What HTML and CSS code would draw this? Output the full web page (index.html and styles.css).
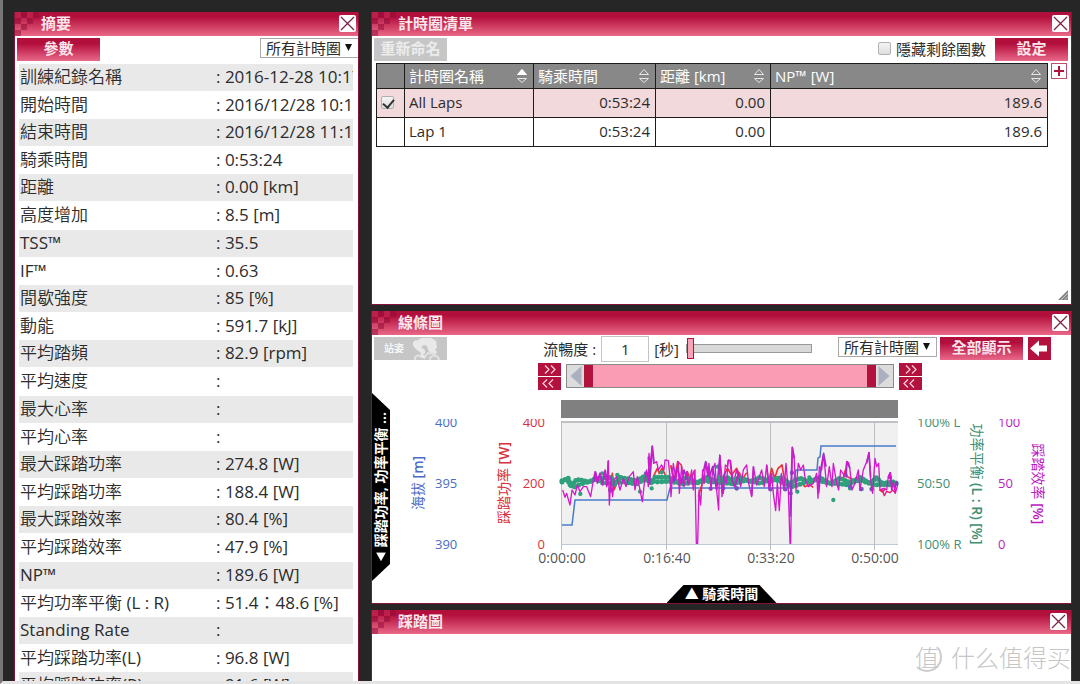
FILE: index.html
```html
<!DOCTYPE html>
<html lang="zh-Hant">
<head>
<meta charset="utf-8">
<title>訓練紀錄</title>
<link rel="stylesheet" href="styles.css">
</head>
<body>
<svg class="defs" aria-hidden="true">
  <symbol id="checker" viewBox="0 0 24 24">
    <path fill="#8e0c38" fill-opacity=".5" d="M6 0h6v6H6zM18 0h6v6h-6zM0 6h6v6H0zM12 6h6v6h-6zM6 12h6v6H6zM0 18h6v6H0z"/>
    <path fill="#ef7f9b" fill-opacity=".15" d="M0 0h6v6H0zM12 0h6v6h-6zM6 6h6v6H6zM0 12h6v6H0z"/>
  </symbol>
  <symbol id="cross" viewBox="0 0 17 17">
    <path stroke="#7c2444" stroke-width="1.3" d="M2 2l13 13M15 2L2 15"/>
  </symbol>
  <symbol id="sort" viewBox="0 0 12 16">
    <path fill="none" stroke="#e6e6e6" d="M1.5 6.5L6 1.5l4.500 5zM1.500 10.500L6 14.500l4.500-4z"/>
  </symbol>
  <symbol id="forward" viewBox="0 0 23 12">
    <path fill="none" stroke="#ffd3de" stroke-width="1.200" d="M7 2l4 4-4 4M13 2l4 4-4 4"/>
  </symbol>
  <symbol id="backward" viewBox="0 0 23 12">
    <path fill="none" stroke="#ffd3de" stroke-width="1.200" d="M9 2L5 6l4 4M15 2l-4 4 4 4"/>
  </symbol>
</svg>
<div class="app">
  <main class="desk">
    <section class="panel summary">
      <header class="panel-head">
        <svg class="checker"><use href="#checker"/></svg>
        <h2>摘要</h2>
        <button class="close" aria-label="關閉"><svg><use href="#cross"/></svg></button>
      </header>
      <div class="toolbar">
        <button class="action wide">參數</button>
        <span class="picker push"><select aria-label="計時圈"><option>所有計時圈</option></select></span>
      </div>
      <table class="facts">
        <tr><th>訓練紀錄名稱</th><td>: 2016-12-28 10:17:07</td></tr>
        <tr><th>開始時間</th><td>: 2016/12/28 10:17:07</td></tr>
        <tr><th>結束時間</th><td>: 2016/12/28 11:10:31</td></tr>
        <tr><th>騎乘時間</th><td>: 0:53:24</td></tr>
        <tr><th>距離</th><td>: 0.00 [km]</td></tr>
        <tr><th>高度增加</th><td>: 8.5 [m]</td></tr>
        <tr><th>TSS™</th><td>: 35.5</td></tr>
        <tr><th>IF™</th><td>: 0.63</td></tr>
        <tr><th>間歇強度</th><td>: 85 [%]</td></tr>
        <tr><th>動能</th><td>: 591.7 [kJ]</td></tr>
        <tr><th>平均踏頻</th><td>: 82.9 [rpm]</td></tr>
        <tr><th>平均速度</th><td>:</td></tr>
        <tr><th>最大心率</th><td>:</td></tr>
        <tr><th>平均心率</th><td>:</td></tr>
        <tr><th>最大踩踏功率</th><td>: 274.8 [W]</td></tr>
        <tr><th>平均踩踏功率</th><td>: 188.4 [W]</td></tr>
        <tr><th>最大踩踏效率</th><td>: 80.4 [%]</td></tr>
        <tr><th>平均踩踏效率</th><td>: 47.9 [%]</td></tr>
        <tr><th>NP™</th><td>: 189.6 [W]</td></tr>
        <tr><th>平均功率平衡 (L : R)</th><td>: 51.4：48.6 [%]</td></tr>
        <tr><th>Standing Rate</th><td>:</td></tr>
        <tr><th>平均踩踏功率(L)</th><td>: 96.8 [W]</td></tr>
        <tr><th>平均踩踏功率(R)</th><td>: 91.6 [W]</td></tr>
      </table>
    </section>

    <div class="stack">
      <section class="panel laps">
        <header class="panel-head">
          <svg class="checker"><use href="#checker"/></svg>
          <h2>計時圈清單</h2>
          <button class="close" aria-label="關閉"><svg><use href="#cross"/></svg></button>
        </header>
        <div class="toolbar">
          <button class="action off" disabled>重新命名</button>
          <label class="check push"><input type="checkbox">隱藏剩餘圈數</label>
          <button class="action">設定</button>
        </div>
        <div class="lap-area">
          <table class="lap-table">
            <colgroup><col class="c-check"><col class="c-name"><col class="c-time"><col class="c-dist"><col></colgroup>
            <thead>
              <tr>
                <th></th>
                <th><span class="sorter">計時圈名稱<svg><use href="#sort"/><path fill="#fff" d="M1 7l5-6 5 6z"/></svg></span></th>
                <th><span class="sorter">騎乘時間<svg><use href="#sort"/></svg></span></th>
                <th><span class="sorter">距離 [km]<svg><use href="#sort"/></svg></span></th>
                <th><span class="sorter">NP™ [W]<svg><use href="#sort"/></svg></span></th>
              </tr>
            </thead>
            <tbody>
              <tr class="picked"><td class="tick"><input type="checkbox" checked aria-label="All Laps"></td><td>All Laps</td><td class="num">0:53:24</td><td class="num">0.00</td><td class="num">189.6</td></tr>
              <tr><td></td><td>Lap 1</td><td class="num">0:53:24</td><td class="num">0.00</td><td class="num">189.6</td></tr>
            </tbody>
          </table>
          <button class="add" aria-label="新增欄位"><svg viewBox="0 0 14 14"><path stroke="#b4123e" stroke-width="2" d="M2 7h10M7 2v10"/></svg></button>
        </div>
        <svg class="grip" viewBox="0 0 10 10"><path fill="#858585" d="M10 0v10H0z"/><path stroke="#ccc" d="M3 10l7-7M6.500 10l3.500-3.500"/></svg>
      </section>

      <section class="panel lines">
        <header class="panel-head">
          <svg class="checker"><use href="#checker"/></svg>
          <h2>線條圖</h2>
          <button class="close" aria-label="關閉"><svg><use href="#cross"/></svg></button>
        </header>
        <div class="toolbar">
          <button class="action off rider" disabled>站姿
            <svg viewBox="0 0 28 22"><path fill="#e9e9e9" d="M6 2l4-2h9l5 3 1 6-2 3 2 2-2 3-4-2-3-3-1-4-3-1-3 2 4 3 0 3-2 2 3 1-1 3-5-2 1-4-4-3-3-3-1-2 4-1zM1 4l3-2 4 2 1 3-4 2-4-2z"/><path fill="none" stroke="#e2e2e2" stroke-width="2" d="M3 22c-1-4 3-6 6-3M18 22c-1-5 8-6 9 0M12 20l4-5 8 1"/></svg>
          </button>
          <div class="smooth push">
            <label for="smooth">流暢度 :</label>
            <input id="smooth" class="number" type="text" value="1">
            <span class="unit">[秒]</span>
            <input class="slider" type="range" min="1" max="60" value="1" aria-label="流暢度">
          </div>
          <span class="picker"><select aria-label="計時圈"><option>所有計時圈</option></select></span>
          <button class="action wide">全部顯示</button>
          <button class="back" aria-label="返回"><svg viewBox="0 0 23 23"><path fill="#fff" d="M2 11.500l9-8v5h8v6h-8v5z"/></svg></button>
        </div>
        <div class="range-row">
          <div class="steps">
            <button aria-label="起點向後"><svg><use href="#forward"/></svg></button>
            <button aria-label="起點向前"><svg><use href="#backward"/></svg></button>
          </div>
          <div class="range">
            <button class="arrow" aria-label="向左"><svg viewBox="0 0 14 20"><path fill="#abb0bf" d="M13 0v20L2 10z"/></svg></button>
            <div class="span"></div>
            <button class="arrow" aria-label="向右"><svg viewBox="0 0 14 20"><path fill="#abb0bf" d="M1 0v20l11-10z"/></svg></button>
          </div>
          <div class="steps">
            <button aria-label="終點向後"><svg><use href="#forward"/></svg></button>
            <button aria-label="終點向前"><svg><use href="#backward"/></svg></button>
          </div>
        </div>
        <div class="chart-row">
          <button class="side-tab"><span><i></i>踩踏功率, 功率平衡 ...</span></button>
          <svg class="chart" viewBox="390 393 681 192" role="img" aria-label="踩踏功率與功率平衡">
            <path fill="#808080" d="M561 400h337v18H561z"/>
            <path fill="#f0f0f0" d="M562 421h336v124H562z"/>
            <path fill="none" stroke="#c0c0c4" stroke-width="2" d="M561 422h337"/>
            <path fill="none" stroke="#c0c8d8" d="M561 544.500h337"/>
            <path fill="none" stroke="#bcbcc2" d="M561.500 421v129M666.500 421v129M770.500 421v129M874.500 421v129"/>
            <path fill="none" stroke="#4a7cc8" stroke-width="1.500" d="M562 525H572L575 500H667L670 488H792L796 470H817L818 458L820 457L821 446H896"/>
            <g fill="none" stroke-linejoin="round" transform="translate(540 390) scale(.3333)">
              <path stroke="#f03038" stroke-width="5" d="M210 300L217 250L222 300L240 255M340 260L352 235L358 250L366 235L376 255M392 225L402 275L413 215L424 225L430 280L442 245L452 270L464 240M475 320L490 270L510 250M545 270L562 235L575 255L590 235L600 260"/>
              <g stroke="#2fa07c" stroke-linecap="round">
                <path stroke-width="15" stroke-dasharray="0 10" d="M66 272L85 265L92 290L110 268L150 276L165 266L215 262L222 285L240 262L290 272L318 256L332 280L345 262L385 262L410 275L440 262L470 280L500 262L530 275L560 262L590 275L600 262"/>
                <path stroke-width="15" stroke-dasharray="0 13" d="M66 276L80 268L98 292L130 280L170 268L190 280L250 276L290 282L310 270L350 276L390 274L430 282L490 272L550 280L600 274"/>
                <path stroke-width="13" d="M121 312h0M187 250h0M232 255h0M210 300h0M300 305h0M335 295h0M365 247h0M533 230h0"/>
              </g>
              <path stroke="#7058c0" stroke-width="13" stroke-linecap="round" d="M214 302h0M318 250h0M512 296h0M549 295h0M590 295h0"/>
              <path stroke="#8a35c8" stroke-width="5" d="M162 275L167 246L172 275L180 250L187 280L196 242L202 285L205 212M325 200L329 280L337 168L342 215M395 230L402 275L412 235L425 280L432 240L445 280M490 245L497 215L508 260L518 230L530 300L540 195"/>
              <path stroke="#d418cc" stroke-width="4" d="M68 300L75 322L80 310L86 332L90 345L96 300L105 315L112 285L120 305L130 290L140 290L152 320L160 270L165 245L172 280L180 250L188 285L195 240L200 290L205 212L208 345L213 260L218 320L222 270L230 260L240 300L250 265L258 290L268 260L280 245L285 300L292 260L300 300L307 335L313 280L320 240L325 290L327 190L331 230L336 170L341 220L350 215L355 240L365 225L372 240L375 210L385 212L390 260L393 320L400 220L408 270L415 215L418 310L425 230L432 290L440 245L447 285L455 240L460 300L465 240L469 460H473L477 300L482 345L488 240L492 280L497 215L503 260L507 220L513 300L518 240L525 220L530 300L536 360L539 195L543 235L550 310L556 225L562 230L566 210L572 212L576 250L580 280L590 240L596 265L600 262"/>
            </g>
            <g fill="none" stroke-linejoin="round" transform="translate(720 390) scale(.3333)">
              <path stroke="#f03038" stroke-width="5" d="M50 270L58 248L66 270L80 248M146 275L155 235L164 265L174 235L186 225L192 260L200 270M228 290L245 280L255 290L268 284L280 292M370 265L376 240L382 260L398 268M480 300L488 306L496 295"/>
              <g stroke="#2fa07c" stroke-linecap="round">
                <path stroke-width="15" stroke-dasharray="0 10" d="M0 262L25 276L60 262L90 275L120 262L150 275L180 262L210 280L240 264L270 276L300 262L330 282L360 264L390 278L420 262L450 280L470 262L485 280L520 276L533 282"/>
                <path stroke-width="15" stroke-dasharray="0 12" d="M0 274L40 282L80 270L120 280L160 266L200 284L220 290L280 268L320 278L380 284L420 270L460 284L500 284L530 286"/>
                <path stroke-width="13" d="M340 330h0M195 295h0M232 305h0M390 295h0M425 297h0M455 296h0M268 262h0M272 272h0"/>
              </g>
              <path stroke="#7058c0" stroke-width="13" stroke-linecap="round" d="M10 295h0M50 295h0M152 298h0M196 298h0M205 285h0M212 310h0M216 248h0M390 290h0M423 297h0M455 298h0M510 262h0"/>
              <path stroke="#8a35c8" stroke-width="5" d="M8 310L14 250M36 270L44 290L55 255M95 318L101 230M140 225L148 300L155 250M210 380L217 172L223 205M296 310L303 235L311 190L318 230M378 262L381 215L390 235M440 220L447 188L452 262M505 262L511 248L516 300M524 300L529 275L533 285"/>
              <path stroke="#d418cc" stroke-width="4" d="M0 200L6 320L12 260L20 280L24 212H30L36 270L44 290L55 250L62 290L70 240L80 225L86 280L95 320L100 230L110 285L118 260L125 240L133 290L140 225L148 300L155 250L160 310L167 362L172 280L178 362L184 250L192 300L198 220L205 300L210 460H212L217 172L222 200L228 300L235 220L242 240L250 225L256 270L265 290L280 280L290 250L294 325L298 230L305 240L310 195L314 225L320 290L328 230L336 290L340 220L350 280L356 300L362 240L375 260L380 215L386 218L390 240L396 300L405 280L415 240L420 300L430 240L440 215L447 188L452 270L458 310L465 205L470 230L476 220L480 300L490 295L500 300L505 260L511 248L515 300L520 275L526 310L533 285"/>
              <path stroke="#e81880" stroke-width="4" d="M478 300H487L493 317L500 304L510 308L518 300L526 308"/>
            </g>
            <clipPath id="ticks"><path d="M390 419h681v166H390z"/></clipPath>
            <g class="tick-text" clip-path="url(#ticks)">
              <g class="blue"><text x="435" y="427">400</text><text x="435" y="488">395</text><text x="435" y="549">390</text></g>
              <g class="red end"><text x="545" y="427">400</text><text x="545" y="488">200</text><text x="545" y="549">0</text></g>
              <g class="green"><text x="917" y="427">100% L</text><text x="917" y="488">50:50</text><text x="917" y="549">100% R</text></g>
              <g class="magenta"><text x="998" y="427">100</text><text x="998" y="488">50</text><text x="998" y="549">0</text></g>
            </g>
            <g class="time-text"><text x="562" y="563">0:00:00</text><text x="667" y="563">0:16:40</text><text x="771" y="563">0:33:20</text><text x="875" y="563">0:50:00</text></g>
            <g class="axis-title">
              <text class="blue" transform="translate(423 483) rotate(-90)">海拔 <tspan>[m]</tspan></text>
              <text class="red" transform="translate(509 483) rotate(-90)">踩踏功率 <tspan>[W]</tspan></text>
              <text class="green" transform="translate(972 484) rotate(90)">功率平衡 <tspan>(L : R) [%]</tspan></text>
              <text class="magenta" transform="translate(1033 484) rotate(90)">踩踏效率 <tspan>[%]</tspan></text>
            </g>
          </svg>
        </div>
        <button class="bottom-tab">▲ 騎乘時間</button>
      </section>

      <section class="panel pedal">
        <header class="panel-head">
          <svg class="checker"><use href="#checker"/></svg>
          <h2>踩踏圖</h2>
          <button class="close" aria-label="關閉"><svg><use href="#cross"/></svg></button>
        </header>
        <p class="watermark" lang="zh-Hans"><span class="seal">值</span>什么值得买</p>
      </section>
    </div>
  </main>
</div>
</body>
</html>
```
FILE: styles.css
```css
* { box-sizing: border-box; }
body {
  margin: 0;
  background: #262626;
  color: #2c2c2c;
  font-family: "Open Sans", "Noto Sans CJK TC", sans-serif;
  font-size: 15px;
}
button, input, select { font: inherit; color: inherit; margin: 0; padding: 0; }
button { border: 0; display: block; }
button svg { display: block; width: 100%; height: 100%; }
.defs { position: absolute; width: 0; height: 0; }

.app {
  height: 100vh;
  overflow: hidden;
  border-left: 3px solid #777;
  border-bottom: 3px solid #e4e4e4;
}
.desk {
  height: 100%;
  display: grid;
  grid-template-columns: minmax(0, 345px) minmax(0, 1fr);
  grid-template-rows: minmax(0, 1fr);
  gap: 12px;
  padding: 12px 8px 0 11px;
}
.stack {
  display: grid;
  grid-template-rows: minmax(0, 1fr) auto 71px;
  gap: 6px;
}

.panel {
  background: #fff;
  border: 1px solid #82143a;
  border-top: 0;
  overflow: hidden;
  display: flex;
  flex-direction: column;
}
.summary, .pedal { border-bottom: 0; }
.panel-head {
  flex: none;
  height: 24px;
  display: flex;
  align-items: flex-start;
  padding-right: 2px;
  background: linear-gradient(#b30f3c 0, #b30f3c 20%, #ea6887 100%);
}
.pedal .panel-head { padding-right: 4px; }
.checker { width: 24px; height: 24px; }
.panel-head h2 {
  flex: 1;
  margin: 0 0 0 2px;
  font-size: 15px;
  line-height: 22px;
  font-weight: 700;
  color: #fbe6ec;
}
.close {
  width: 17px;
  height: 17px;
  margin-top: 3px;
  background: #fff;
  border-radius: 2px;
}

.toolbar {
  flex: none;
  display: flex;
  align-items: flex-start;
  padding: 2px 3px 0 2px;
  height: 28px;
}
.push { margin-left: auto; }
.action {
  width: 73px;
  height: 23px;
  padding-bottom: 2px;
  font-weight: 700;
  line-height: 21px;
  color: #fde4ea;
  background: linear-gradient(#b30f3c 25%, #e9688a);
  white-space: nowrap;
}
.wide { width: 83px; }
.off { background: #c6c6c6; color: #ececec; }
.picker { position: relative; display: block; }
.picker select {
  display: block;
  appearance: none;
  width: 99px;
  height: 20px;
  padding-left: 5px;
  line-height: 18px;
  border: 1px solid #a9a9a9;
  border-radius: 0;
  background: #fff;
}
.picker::after {
  content: "";
  position: absolute;
  right: 7px;
  top: 6px;
  width: 7px;
  height: 7px;
  background: #111;
  clip-path: polygon(0 0, 100% 0, 50% 100%);
  pointer-events: none;
}

.summary .toolbar { padding-right: 0; }
.summary .picker { margin-right: -1px; }
.facts {
  width: 334px;
  margin-left: 4px;
  border-spacing: 0;
  table-layout: fixed;
  font-family: "Open Sans", "Noto Sans CJK TC DemiLight", "Noto Sans CJK TC", sans-serif;
  font-size: 17px;
  line-height: 25px;
}
.facts th, .facts td {
  padding: 0 0 2px 1px;
  font-weight: 400;
  text-align: left;
  white-space: nowrap;
  overflow: hidden;
}
.facts th { width: 196px; }
.facts tr { height: 27px; }
.facts tr:nth-child(even) { height: 28px; }
.facts tr:nth-child(6n) { height: 29px; }
.facts tr:nth-child(odd) { background: #e9e9e9; }

input[type="checkbox"] {
  appearance: none;
  flex: none;
  display: block;
  width: 13px;
  height: 13px;
  border: 1px solid #b0b0b0;
  border-radius: 2px;
  background: linear-gradient(#f4f4f4, #dedede);
}
input[type="checkbox"]:checked::after {
  content: "";
  display: block;
  width: 9px;
  height: 5px;
  margin: 2px 1px;
  border: solid #333;
  border-width: 0 0 2px 2px;
  transform: rotate(-50deg);
}
.check { display: flex; align-items: center; gap: 5px; height: 21px; margin-right: 9px; }

.lap-area {
  display: flex;
  align-items: flex-start;
  gap: 3px;
  padding: 0 4px;
  margin-top: -1px;
}
.lap-table {
  flex: 1;
  border-collapse: collapse;
  table-layout: fixed;
  line-height: 20px;
}
.lap-table th, .lap-table td {
  border: 1px solid #1c1c1c;
  padding: 0 5px 0 4px;
  text-align: left;
  font-weight: 400;
  white-space: nowrap;
}
.lap-table th { height: 25px; background: #888; color: #fff; }
.lap-table td { height: 29px; padding-bottom: 2px; }
.lap-table .tick { padding: 0 4px 2px; }
.lap-table .num { text-align: right; }
.picked { background: #f2d9db; }
.c-check { width: 28px; }
.c-name { width: 129px; }
.c-time { width: 122px; }
.c-dist { width: 115px; }
.sorter { display: flex; align-items: center; justify-content: space-between; }
.sorter svg { width: 12px; height: 16px; }
.add { width: 16px; height: 16px; background: #fff; border: 1px solid #c04c70; }
.grip { width: 10px; height: 10px; margin: auto 3px 4px auto; }

.lines .toolbar { padding-right: 20px; height: 27px; }
.rider { display: flex; align-items: center; justify-content: space-between; padding: 0 7px 0 10px; font-size: 10px; color: #f6f6f6; }
.rider svg { width: 28px; height: 22px; }
.smooth { display: flex; align-items: center; height: 23px; margin-right: 26px; }
.number { width: 48px; height: 26px; margin: 0 5px; border: 1px solid #c4c4c4; text-align: center; }
.unit { margin-right: 7px; }
.slider { appearance: none; width: 126px; height: 21px; background: none; }
.slider::-webkit-slider-runnable-track { height: 9px; border: 1px solid #9a9a9a; background: #d9d9d9; }
.slider::-webkit-slider-thumb { appearance: none; width: 7px; height: 21px; margin-top: -7px; border: 1px solid #b4123e; background: #f9a3b8; }
.lines .picker { margin-right: 3px; }
.back { width: 23px; height: 23px; margin-left: 5px; background: #b4123e; }

.range-row { display: flex; justify-content: center; align-items: center; gap: 5px; padding-left: 17px; height: 28px; }
.steps { display: grid; gap: 1px; }
.steps button { width: 23px; height: 13px; background: #b4123e; }
.range { width: 328px; height: 24px; display: flex; align-items: center; border: 1px solid #8a8a8a; background: #dcdcdc; }
.arrow { flex: none; width: 17px; height: 20px; background: none; }
.span { flex: 1; height: 22px; border: solid #b4123e; border-width: 0 9px; background: #f99cb4; }

.chart-row { display: flex; align-items: flex-start; margin-top: 3px; }
.side-tab {
  flex: none;
  width: 18px;
  height: 188px;
  background: #000;
  color: #fff;
  font-size: 14px;
  font-weight: 700;
  clip-path: polygon(0 0, 100% 17px, 100% 171px, 0 100%);
}
.side-tab span {
  display: flex;
  align-items: center;
  gap: 5px;
  margin: auto;
  width: 18px;
  line-height: 18px;
  writing-mode: vertical-rl;
  text-orientation: sideways;
  transform: rotate(180deg);
  white-space: nowrap;
}
.side-tab i { width: 10px; height: 9px; background: #fff; clip-path: polygon(0 100%, 100% 100%, 50% 0); }
.chart { flex: 1; min-width: 0; display: block; }
.tick-text { font-size: 13px; }
.time-text { font-size: 14px; text-anchor: middle; fill: #555; }
.axis-title { font-size: 14px; text-anchor: middle; }
.axis-title tspan { font-weight: 600; }
.end { text-anchor: end; }
.blue { fill: #4a6cc4; }
.red { fill: #d8303c; }
.green { fill: #3f8f72; }
.magenta { fill: #bb1cc4; }
.bottom-tab {
  width: 110px;
  height: 18px;
  margin: 0 auto;
  background: #000;
  color: #fff;
  font-size: 14px;
  font-weight: 700;
  line-height: 18px;
  clip-path: polygon(17px 0, 93px 0, 100% 100%, 0 100%);
}

.watermark {
  display: flex;
  justify-content: flex-end;
  align-items: center;
  gap: 9px;
  margin: 7px 0 0;
  color: #c6c6c6;
  font-family: "Noto Sans CJK SC", sans-serif;
  font-size: 24px;
  line-height: 32px;
  font-weight: 300;
}
.seal {
  width: 30px;
  height: 30px;
  line-height: 26px;
  text-align: center;
  border-radius: 50%;
  border: 2px solid transparent;
  border-right-color: #cbcbcb;
  border-bottom-color: #cbcbcb;
}
```
